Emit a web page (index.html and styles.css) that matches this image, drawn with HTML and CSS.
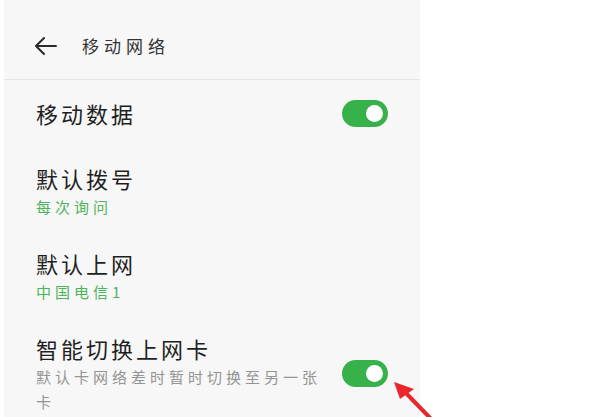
FILE: index.html
```html
<!DOCTYPE html>
<html lang="zh-CN">
<head>
    <meta charset="UTF-8">
    <meta name="viewport" content="width=device-width, initial-scale=1.0">
    <title>移动网络</title>
    <link rel="stylesheet" href="styles.css">
</head>
<body>
    <div class="phone">
        <div class="header">
            <svg class="back" width="24" height="24" viewBox="0 0 24 24">
                <path d="M22 12H2M10 4l-8 8 8 8" fill="none" stroke="#2b2b2b" stroke-width="2" stroke-linecap="round" stroke-linejoin="round"/>
            </svg>
            <span class="header-title">移动网络</span>
        </div>

        <div class="list">
            <div class="row row-single">
                <div class="row-text">
                    <div class="row-title">移动数据</div>
                </div>
                <div class="toggle on"></div>
            </div>
            <div class="row">
                <div class="row-text">
                    <div class="row-title">默认拨号</div>
                    <div class="row-sub green">每次询问</div>
                </div>
            </div>
            <div class="row">
                <div class="row-text">
                    <div class="row-title">默认上网</div>
                    <div class="row-sub green">中国电信1</div>
                </div>
            </div>
            <div class="row">
                <div class="row-text">
                    <div class="row-title">智能切换上网卡</div>
                    <div class="row-sub">默认卡网络差时暂时切换至另一张卡</div>
                </div>
                <div class="toggle on"></div>
            </div>
        </div>
    </div>

    <svg class="pointer" width="50" height="45" viewBox="0 0 50 45">
        <path d="M43 44L12 12" stroke="#e8262b" stroke-width="4" stroke-linecap="round"/>
        <path d="M4 5L24 12L10 22Z" fill="#e8262b"/>
    </svg>
</body>
</html>
```

FILE: styles.css
```css
body {
    margin: 0;
    background: #ffffff;
    font-family: "Noto Sans CJK SC", "Noto Sans", sans-serif;
    overflow: hidden;
}

.phone {
    width: 416px;
    height: 417px;
    margin-left: 4px;
    background: #f7f7f7;
    overflow: hidden;
}

.header {
    height: 67px;
    padding-top: 12px;
    display: flex;
    align-items: center;
    padding-left: 30px;
    border-bottom: 1px solid #e4e4e4;
}

.back {
    margin-right: 24px;
}

.header-title {
    font-size: 17px;
    letter-spacing: 5px;
    color: #333333;
}

.list {
    padding: 3px 32px 0 32px;
}

.row {
    display: flex;
    align-items: center;
    justify-content: space-between;
    padding: 14px 0;
}

.row-single {
    padding-bottom: 19px;
}

.row-text {
    max-width: 290px;
}

.row-title {
    font-size: 22px;
    line-height: 32px;
    letter-spacing: 3px;
    color: #1f1f1f;
}

.row-sub {
    font-size: 15px;
    line-height: 25px;
    letter-spacing: 4px;
    color: #949494;
}

.row-sub.green {
    color: #4cb45a;
}

.toggle {
    position: relative;
    width: 46px;
    height: 27px;
    border-radius: 14px;
    background: #cccccc;
    flex-shrink: 0;
}

.toggle.on {
    background: #37b24b;
}

.toggle::after {
    content: '';
    position: absolute;
    top: 5px;
    left: 5px;
    width: 17px;
    height: 17px;
    border-radius: 50%;
    background: #ffffff;
}

.toggle.on::after {
    left: 24px;
}

.pointer {
    position: absolute;
    left: 390px;
    top: 377px;
}
```
